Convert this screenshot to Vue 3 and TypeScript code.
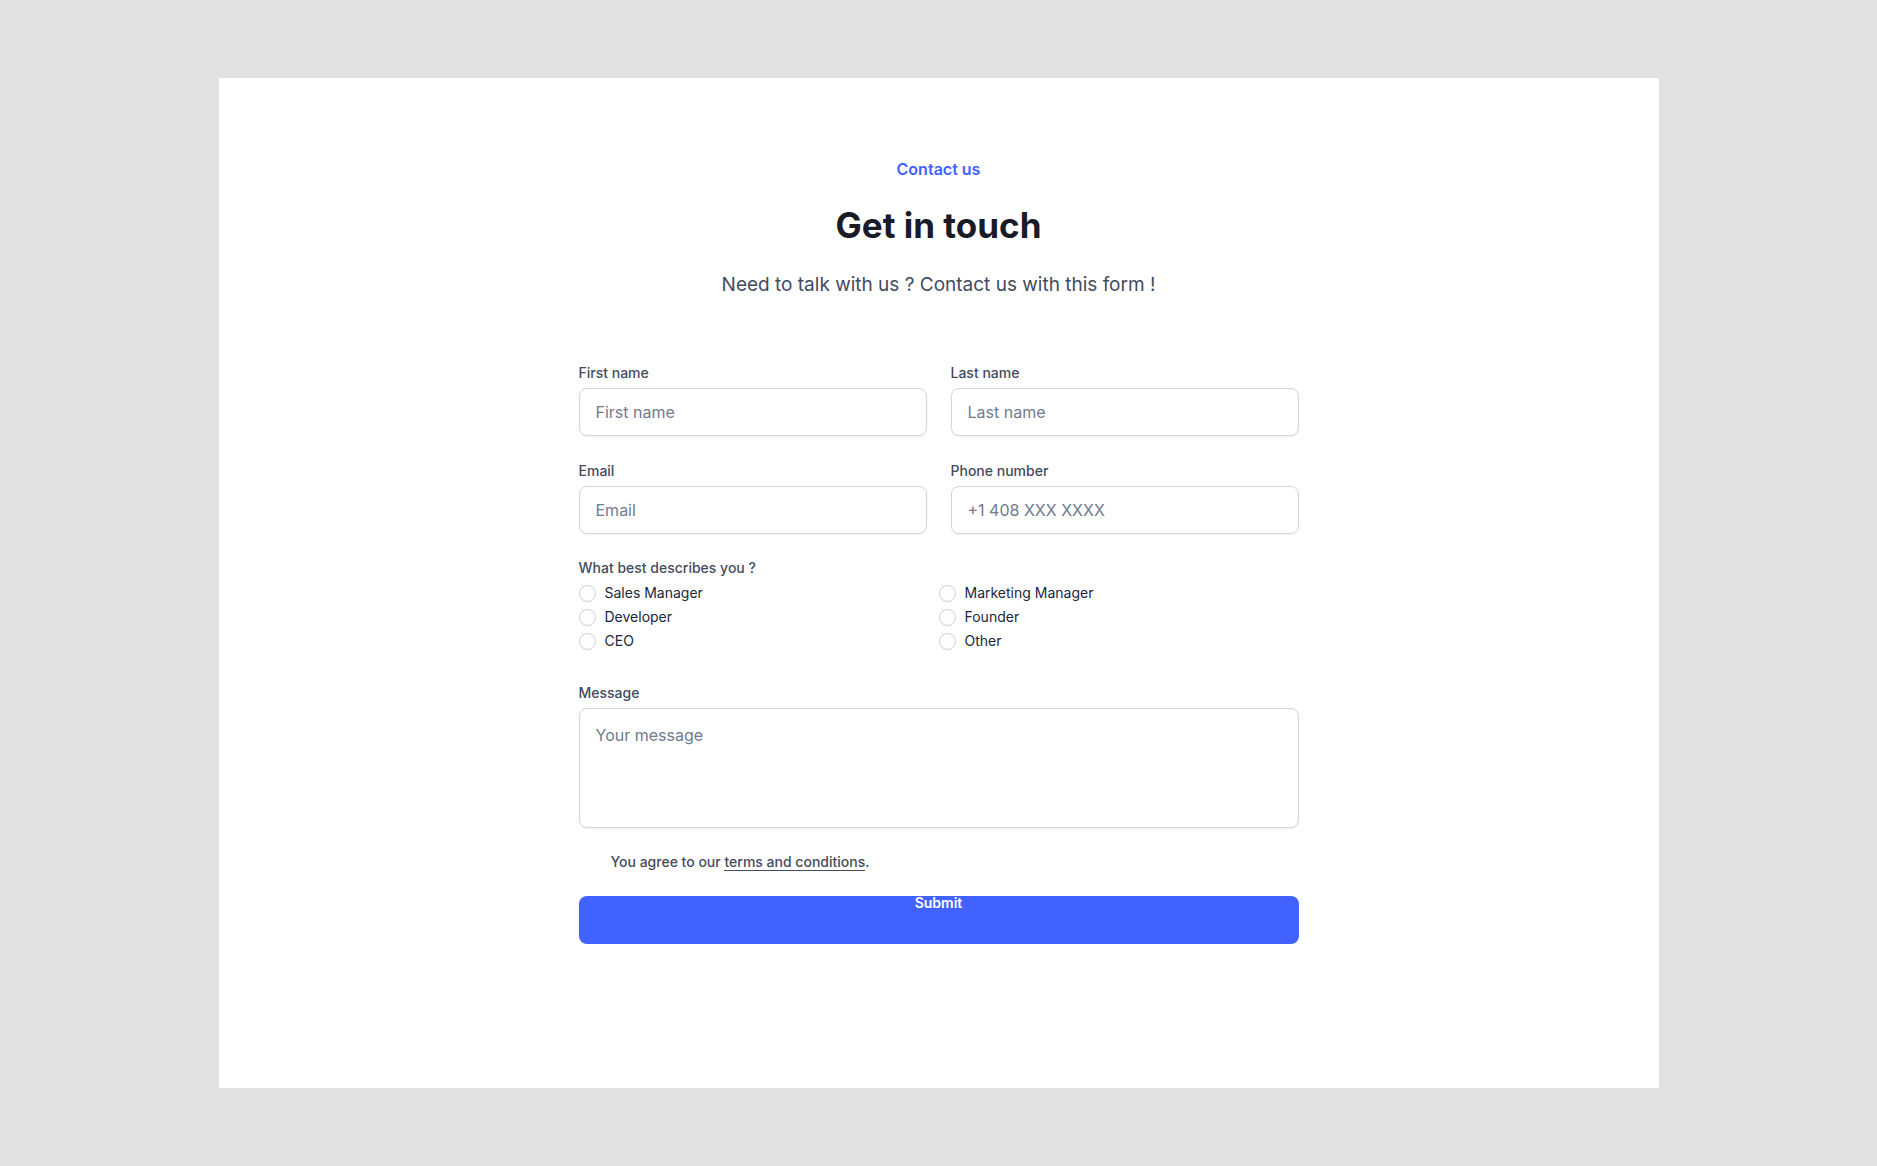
<script setup lang="ts">
import { reactive } from 'vue'

interface Field {
  id: string
  label: string
  placeholder: string
  type: string
}

const fields: Field[] = [
  { id: 'firstName', label: 'First name', placeholder: 'First name', type: 'text' },
  { id: 'lastName', label: 'Last name', placeholder: 'Last name', type: 'text' },
  { id: 'email', label: 'Email', placeholder: 'Email', type: 'email' },
  { id: 'phone', label: 'Phone number', placeholder: '+1 408 XXX XXXX', type: 'tel' },
]

const roles: string[] = ['Sales Manager', 'Marketing Manager', 'Developer', 'Founder', 'CEO', 'Other']

const form = reactive({
  values: { firstName: '', lastName: '', email: '', phone: '' } as Record<string, string>,
  role: '',
  message: '',
  agreed: false,
})
</script>

<template>
  <main class="page">
    <section class="card">
      <header class="intro">
        <p class="eyebrow">Contact us</p>
        <h1 class="title">Get in touch</h1>
        <p class="subtitle">Need to talk with us ? Contact us with this form !</p>
      </header>

      <form class="form" @submit.prevent>
        <div class="fields">
          <div v-for="field in fields" :key="field.id" class="field">
            <label class="label" :for="field.id">{{ field.label }}</label>
            <input
              :id="field.id"
              v-model="form.values[field.id]"
              class="control"
              :type="field.type"
              :placeholder="field.placeholder"
            />
          </div>
        </div>

        <fieldset class="roles">
          <legend class="label">What best describes you ?</legend>
          <div class="options">
            <label v-for="role in roles" :key="role" class="option">
              <input v-model="form.role" class="radio" type="radio" name="role" :value="role" />
              <span>{{ role }}</span>
            </label>
          </div>
        </fieldset>

        <div class="field message">
          <label class="label" for="message">Message</label>
          <textarea id="message" v-model="form.message" class="control area" placeholder="Your message"></textarea>
        </div>

        <div class="terms">
          <input id="agree" v-model="form.agreed" class="check" type="checkbox" />
          <label for="agree">You agree to our <a class="link" href="#terms">terms and conditions</a>.</label>
        </div>

        <button class="submit" type="submit">Submit</button>
      </form>
    </section>
  </main>
</template>

<style>
body {
  margin: 0;
  background: #e1e1e1;
}
</style>

<style scoped>
.page {
  box-sizing: border-box;
  padding: 78px 24px;
  font-family: Inter, 'Liberation Sans', sans-serif;
  color: #434b60;
}

.card {
  box-sizing: border-box;
  max-width: 1440px;
  margin: 0 auto;
  padding: 79px 32px 144px;
  background: #fff;
}

.intro {
  display: flex;
  flex-direction: column;
  align-items: center;
  text-align: center;
}

.eyebrow {
  margin: 0;
  font-size: 16px;
  font-weight: 600;
  line-height: 24px;
  color: #4262ff;
}

.title {
  margin: 20px 0;
  font-size: 35px;
  font-weight: 700;
  line-height: 48px;
  color: #191b26;
}

.subtitle {
  margin: 0;
  font-size: 19px;
  font-weight: 400;
  line-height: 32px;
}

.form {
  display: flex;
  flex-direction: column;
  max-width: 720px;
  margin: 62px auto 0;
}

.fields {
  display: grid;
  grid-template-columns: 1fr 1fr;
  gap: 25px 24px;
}

.field {
  display: flex;
  flex-direction: column;
  gap: 5px;
}

.label {
  padding: 0;
  font-size: 14px;
  font-weight: 500;
  line-height: 20px;
}

.control {
  box-sizing: border-box;
  width: 100%;
  height: 48px;
  padding: 0 16px;
  border: 1px solid #d3d6df;
  border-radius: 8px;
  background: #fff;
  box-shadow: 0 1px 2px rgba(16, 24, 40, 0.06);
  font-family: inherit;
  font-size: 16px;
  line-height: 24px;
  color: #191b26;
}

.control::placeholder {
  color: #727a8e;
  opacity: 1;
}

.area {
  display: block;
  height: 120px;
  padding: 14px 16px;
  resize: none;
}

.roles {
  min-width: 0;
  margin: 24px 0 0;
  padding: 0;
  border: 0;
}

.options {
  display: grid;
  grid-template-columns: 1fr 1fr;
  padding-top: 3px;
}

.option {
  display: flex;
  align-items: center;
  gap: 9px;
  font-size: 14px;
  line-height: 24px;
  color: #20263c;
}

.radio {
  box-sizing: border-box;
  width: 17px;
  height: 17px;
  margin: 0;
  appearance: none;
  border: 1px solid #c9ccd5;
  border-radius: 50%;
  background: #fff;
}

.radio:checked {
  border: 5px solid #4262ff;
}

.message {
  margin-top: 30px;
}

.terms {
  display: flex;
  align-items: center;
  gap: 12px;
  margin-top: 24px;
  font-size: 14px;
  font-weight: 500;
  line-height: 20px;
}

.check {
  width: 20px;
  height: 20px;
  margin: 0;
  appearance: none;
  border-radius: 6px;
  background: #fff;
}

.check:checked {
  background: #4262ff;
}

.link {
  border-bottom: 1px solid #434b60;
  color: inherit;
  text-decoration: none;
}

.submit {
  display: flex;
  justify-content: center;
  align-items: flex-start;
  height: 48px;
  margin-top: 24px;
  padding: 0;
  border: 0;
  border-radius: 8px;
  background: #4262ff;
  font-family: inherit;
  font-size: 14px;
  font-weight: 600;
  line-height: 14px;
  color: #fff;
  cursor: pointer;
}
</style>
